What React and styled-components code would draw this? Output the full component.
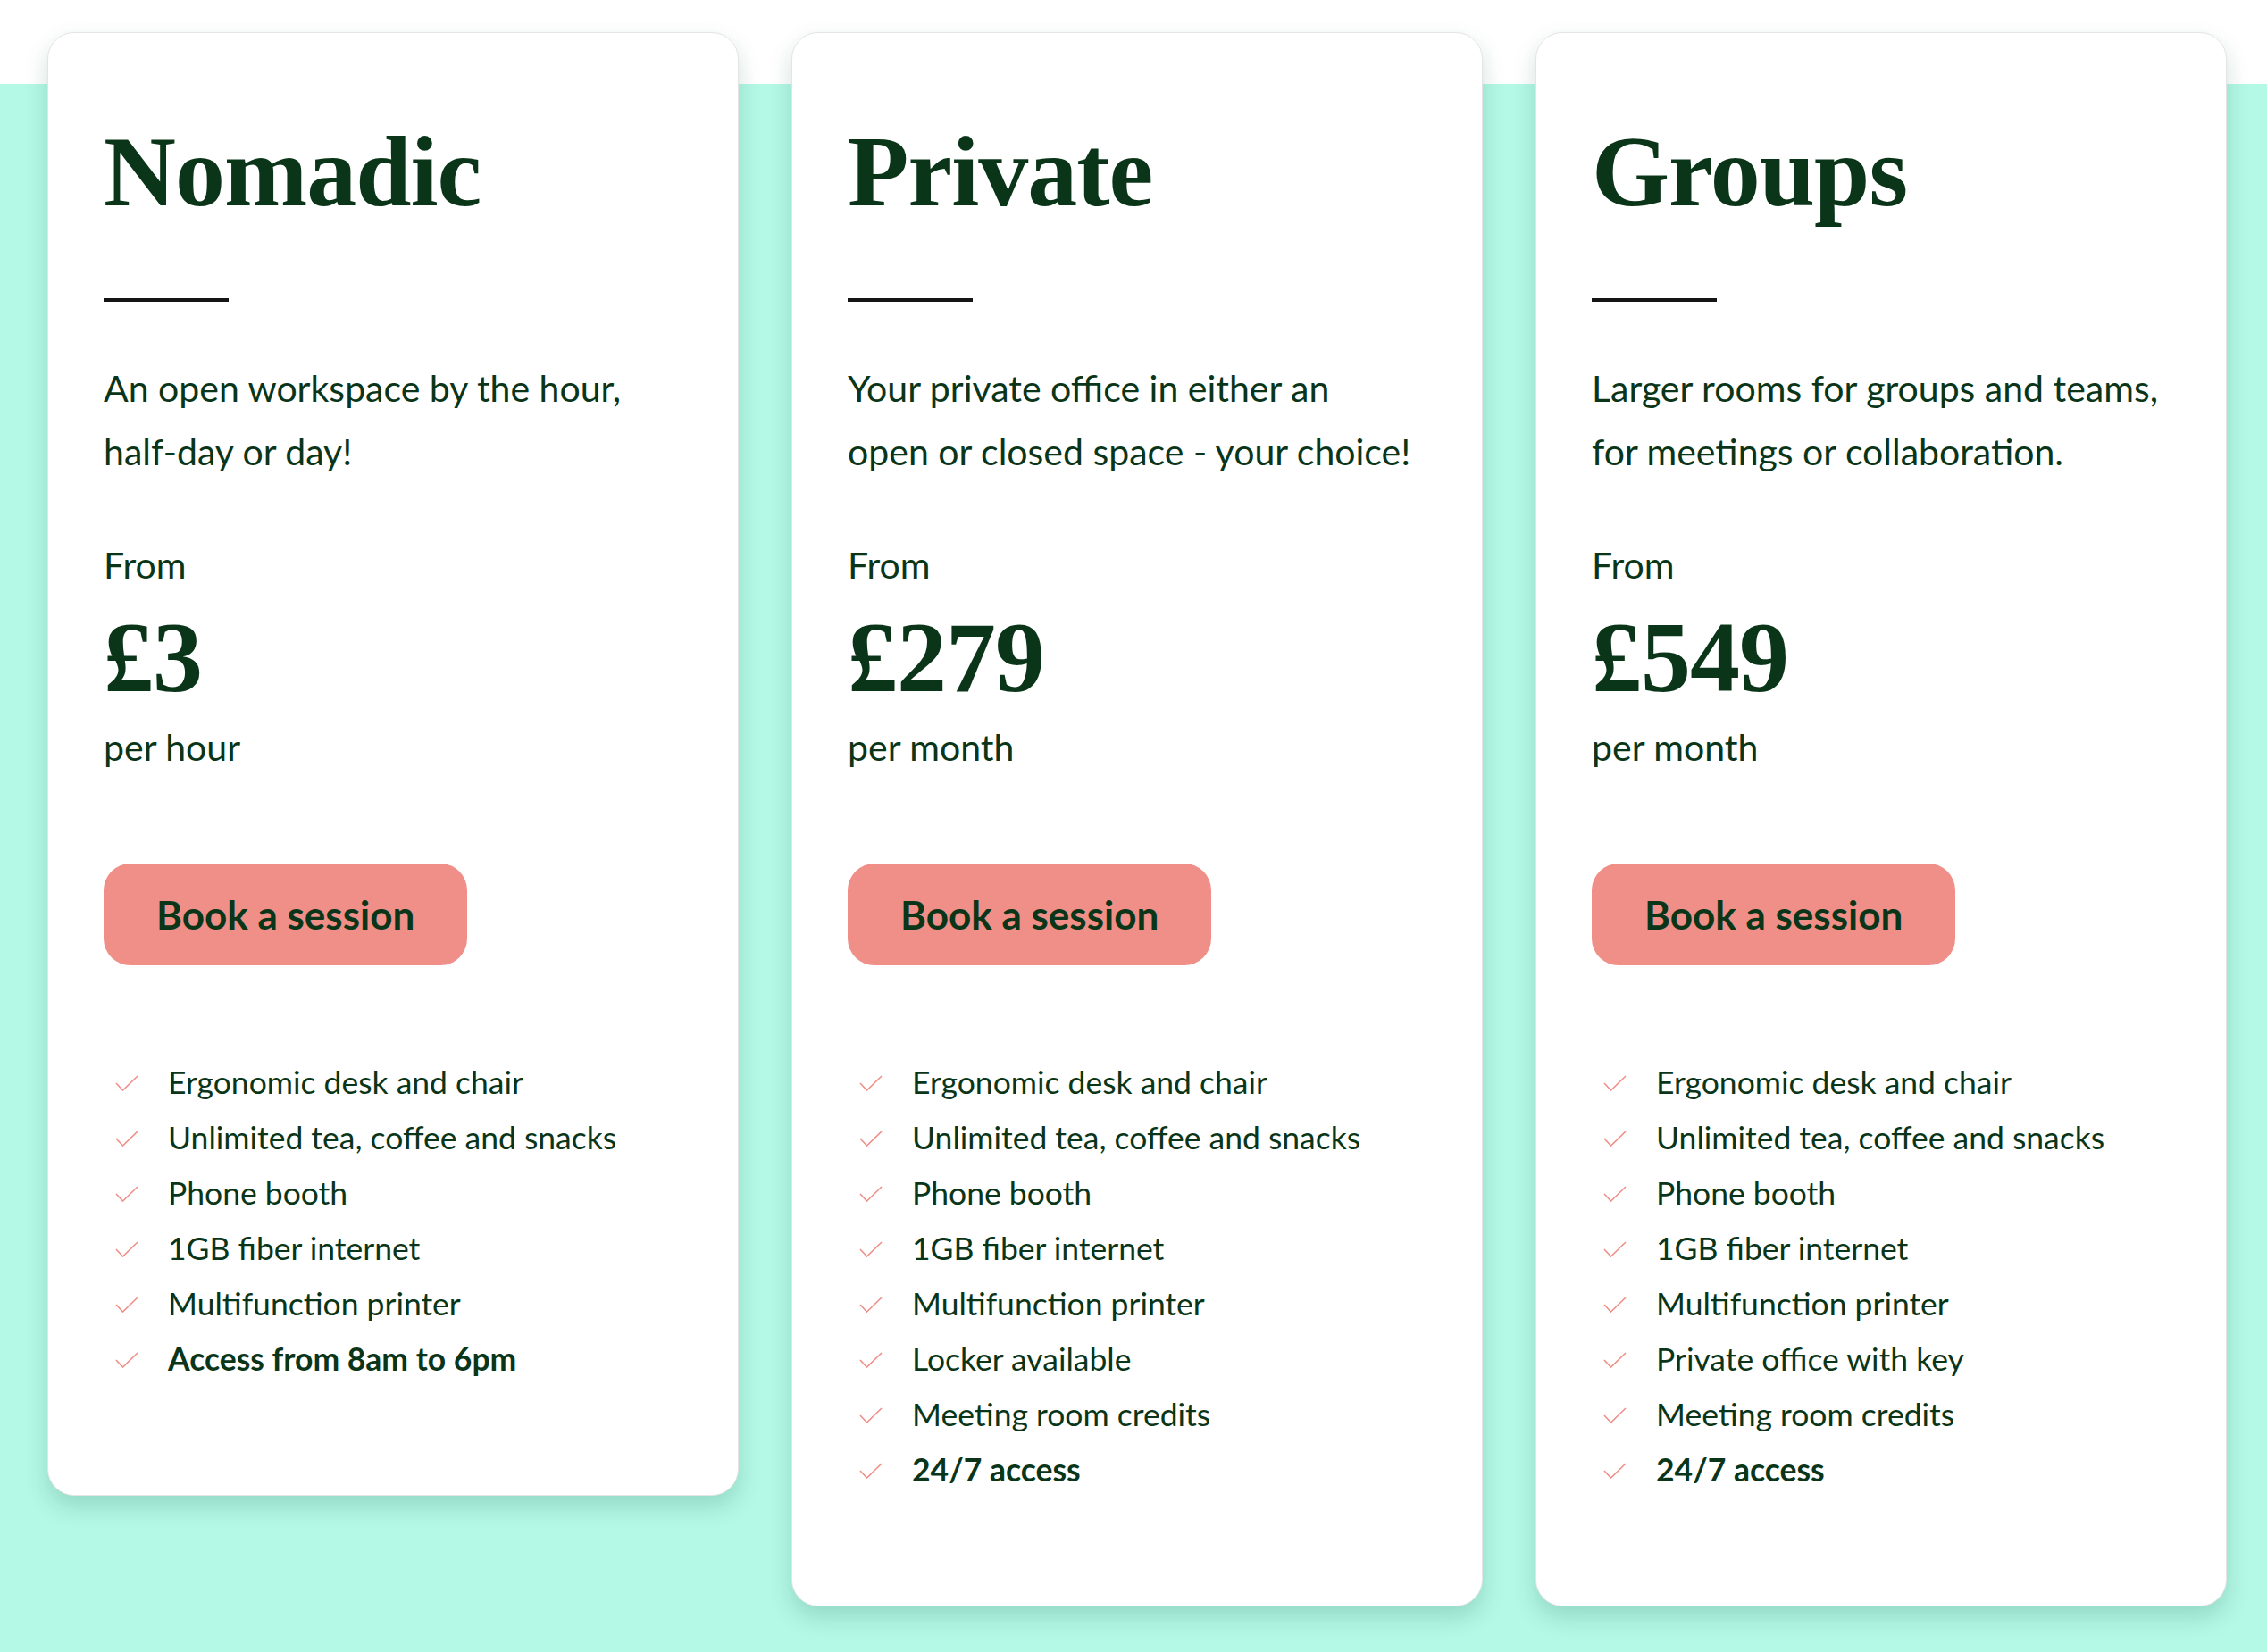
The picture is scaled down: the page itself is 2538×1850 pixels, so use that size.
import React from 'react';
import styled, { createGlobalStyle } from 'styled-components';

const GlobalStyle = createGlobalStyle`
  html, body {
    margin: 0;
    padding: 0;
  }
  body {
    font-family: Lato, "Noto Sans", sans-serif;
    color: #0a3518;
  }
`;

const Page = styled.div`
  min-height: 1850px;
  box-sizing: border-box;
  padding: 36px 0 40px 53px;
  background: linear-gradient(to bottom, #ffffff 0, #ffffff 94px, #b4f8e6 94px, #b4f8e6 100%);
`;

const Grid = styled.div`
  display: grid;
  grid-template-columns: repeat(3, 774px);
  column-gap: 59px;
  align-items: start;
`;

const Card = styled.div`
  box-sizing: border-box;
  background: #fff;
  border: 1px solid #e4e4e4;
  border-radius: 30px;
  padding: 0 62px 122px;
  box-shadow: 0 12px 26px rgba(20, 95, 72, 0.2);
`;

const Title = styled.h2`
  margin: 99px 0 0;
  font-family: "Liberation Serif", "Times New Roman", serif;
  font-weight: 700;
  font-size: 112px;
  line-height: 112px;
  letter-spacing: -1px;
  color: #0a3518;
`;

const Divider = styled.div`
  width: 140px;
  height: 4px;
  margin-top: 86px;
  background: #151515;
`;

const Description = styled.p`
  margin: 61px 0 0;
  font-size: 41px;
  line-height: 71px;
`;

const Label = styled.div`
  margin-top: ${(p) => p.$top}px;
  font-size: 41px;
  line-height: 71px;
`;

const Price = styled.div`
  margin-top: 12px;
  font-family: "Liberation Serif", "Times New Roman", serif;
  font-weight: 700;
  font-size: 112px;
  line-height: 112px;
  letter-spacing: -1px;
`;

const Button = styled.button`
  margin-top: 95px;
  height: 114px;
  padding: 0 59px;
  border: none;
  border-radius: 30px;
  background: #ef8f88;
  color: #0a3518;
  font-family: Lato, "Noto Sans", sans-serif;
  font-weight: 700;
  font-size: 44px;
  cursor: pointer;
`;

const Features = styled.ul`
  list-style: none;
  margin: 99px 0 0;
  padding: 0;
`;

const Feature = styled.li`
  display: flex;
  align-items: center;
  height: 62px;
  font-size: 35.5px;
  font-weight: ${(p) => (p.$strong ? 700 : 400)};

  svg {
    flex: none;
    margin: 4px 33px 0 13px;
  }
`;

const Check = () => (
  <svg width="26" height="18" viewBox="0 0 26 18" fill="none">
    <polyline points="1,9 8.5,17 25,1" stroke="#ef8f88" strokeWidth="1.6" strokeLinejoin="miter" />
  </svg>
);

const plans = [
  {
    name: 'Nomadic',
    text: ['An open workspace by the hour,', 'half-day or day!'],
    price: '£3',
    unit: 'per hour',
    features: ['Ergonomic desk and chair', 'Unlimited tea, coffee and snacks', 'Phone booth', '1GB fiber internet', 'Multifunction printer'],
    last: 'Access from 8am to 6pm',
  },
  {
    name: 'Private',
    text: ['Your private office in either an', 'open or closed space - your choice!'],
    price: '£279',
    unit: 'per month',
    features: ['Ergonomic desk and chair', 'Unlimited tea, coffee and snacks', 'Phone booth', '1GB fiber internet', 'Multifunction printer', 'Locker available', 'Meeting room credits'],
    last: '24/7 access',
  },
  {
    name: 'Groups',
    text: ['Larger rooms for groups and teams,', 'for meetings or collaboration.'],
    price: '£549',
    unit: 'per month',
    features: ['Ergonomic desk and chair', 'Unlimited tea, coffee and snacks', 'Phone booth', '1GB fiber internet', 'Multifunction printer', 'Private office with key', 'Meeting room credits'],
    last: '24/7 access',
  },
];

function PlanCard({ plan }) {
  return (
    <Card>
      <Title>{plan.name}</Title>
      <Divider />
      <Description>
        {plan.text[0]}
        <br />
        {plan.text[1]}
      </Description>
      <Label $top={56}>From</Label>
      <Price>{plan.price}</Price>
      <Label $top={9}>{plan.unit}</Label>
      <Button>Book a session</Button>
      <Features>
        {plan.features.map((f) => (
          <Feature key={f}>
            <Check />
            {f}
          </Feature>
        ))}
        <Feature $strong>
          <Check />
          {plan.last}
        </Feature>
      </Features>
    </Card>
  );
}

export default function App() {
  return (
    <>
      <GlobalStyle />
      <Page>
        <Grid>
          {plans.map((p) => (
            <PlanCard key={p.name} plan={p} />
          ))}
        </Grid>
      </Page>
    </>
  );
}
